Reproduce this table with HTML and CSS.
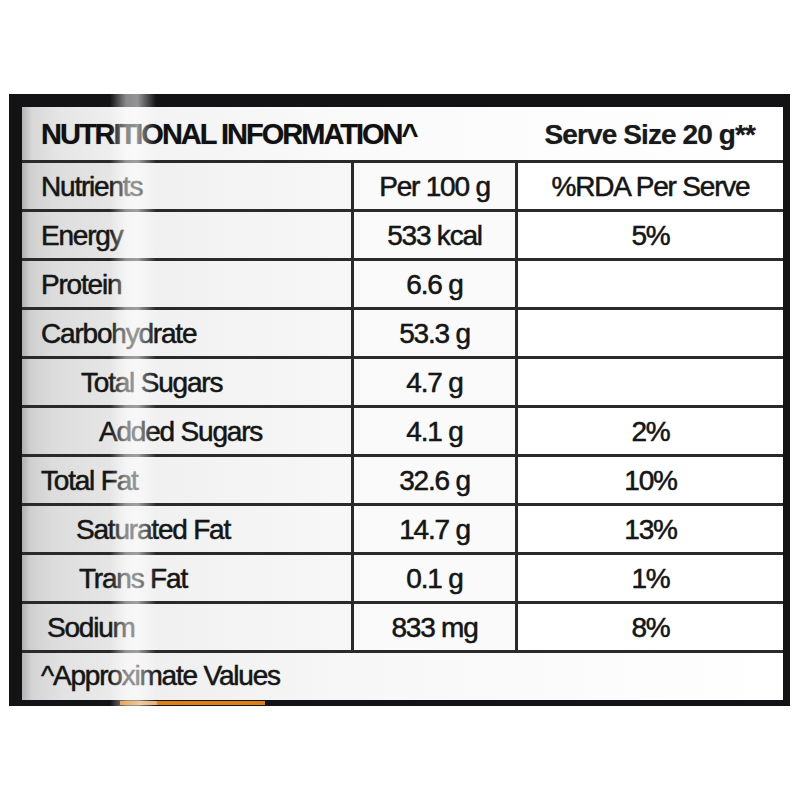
FILE: index.html
```html
<!DOCTYPE html>
<html lang="en">
<head>
<meta charset="utf-8">
<title>Nutritional Information</title>
<link rel="stylesheet" href="styles.css">
</head>
<body>
<div class="label">
  <div class="grid">
    <div class="cell head"><span class="title">NUTRITIONAL INFORMATION^</span><span class="serve">Serve Size 20 g**</span></div>

    <div class="cell c1">Nutrients</div><div class="cell c2">Per 100 g</div><div class="cell c3">%RDA Per Serve</div>
    <div class="cell c1">Energy</div><div class="cell c2">533 kcal</div><div class="cell c3">5%</div>
    <div class="cell c1">Protein</div><div class="cell c2">6.6 g</div><div class="cell c3"></div>
    <div class="cell c1">Carbohydrate</div><div class="cell c2">53.3 g</div><div class="cell c3"></div>
    <div class="cell c1 ind-ts">Total Sugars</div><div class="cell c2">4.7 g</div><div class="cell c3"></div>
    <div class="cell c1 ind-as">Added Sugars</div><div class="cell c2">4.1 g</div><div class="cell c3">2%</div>
    <div class="cell c1">Total Fat</div><div class="cell c2">32.6 g</div><div class="cell c3">10%</div>
    <div class="cell c1 ind-sf">Saturated Fat</div><div class="cell c2">14.7 g</div><div class="cell c3">13%</div>
    <div class="cell c1 ind-tf">Trans Fat</div><div class="cell c2">0.1 g</div><div class="cell c3">1%</div>
    <div class="cell c1 ind-so">Sodium</div><div class="cell c2">833 mg</div><div class="cell c3">8%</div>

    <div class="cell foot">^Approximate Values</div>
  </div>
  <div class="glare"></div>
  <div class="tab"></div>
</div>
</body>
</html>
```

FILE: styles.css
```css
html, body {
  margin: 0;
  padding: 0;
  background: #ffffff;
}

.label {
  position: relative;
  width: 761px;
  margin: 94px 0 0 9px;
  border-style: solid;
  border-color: #131316;
  border-width: 13px 7px 6px 13px;
  font-family: "Liberation Sans", Arial, sans-serif;
  color: #161616;
}

.grid {
  display: grid;
  grid-template-columns: 329px 161px 265px;
  grid-template-rows: 53px repeat(10, 46px) 47px;
  gap: 3px;
  background: #2a2a2a;
}

.cell {
  font-size: 28px;
  letter-spacing: -1.2px;
  line-height: 47px;
  white-space: nowrap;
  background: #fbfbfb;
  -webkit-text-stroke: 0.35px #1a1a1a;
  text-shadow: 0 0 1px rgba(0, 0, 0, 0.45);
}

.head {
  grid-column: 1 / 4;
  display: flex;
  justify-content: space-between;
  align-items: center;
  padding: 2px 28px 0 19px;
  line-height: 53px;
  background: linear-gradient(to right, #b4b4b4 0px, #d8d8d8 10px, #e6e6e6 40px, #f2f2f2 110px, #fafafa 330px, #ffffff 761px);
}

.title {
  font-size: 29px;
  font-weight: bold;
  letter-spacing: -2px;
  color: #111;
  -webkit-text-stroke: 0;
}

.serve {
  font-size: 28px;
  font-weight: bold;
  letter-spacing: -0.9px;
  color: #1a1a1a;
  -webkit-text-stroke: 0;
}

.c1 {
  padding-left: 19px;
  background: linear-gradient(to right, #b0b0b0 0px, #cfcfcf 8px, #dcdcdc 30px, #e6e6e6 90px, #f0f0f0 120px, #f3f3f3 200px, #f7f7f7 329px);
}

.c2 {
  text-align: center;
  background: #fafafa;
}

.c3 {
  text-align: center;
  background: #ffffff;
}

.ind-ts { padding-left: 59px; }
.ind-as { padding-left: 77px; }
.ind-sf { padding-left: 54px; }
.ind-tf { padding-left: 57px; }
.ind-so { padding-left: 25px; }

.foot {
  grid-column: 1 / 4;
  padding-left: 19px;
  line-height: 45px;
  background: linear-gradient(to right, #b4b4b4 0px, #d4d4d4 10px, #e2e2e2 40px, #eeeeee 110px, #f7f7f7 330px, #ffffff 761px);
}

.glare {
  position: absolute;
  top: -13px;
  bottom: -6px;
  left: 88px;
  width: 46px;
  background: linear-gradient(to right, rgba(255,255,255,0) 0%, rgba(255,255,255,0.5) 35%, rgba(255,255,255,0.55) 60%, rgba(255,255,255,0) 100%);
  pointer-events: none;
}

.tab {
  position: absolute;
  left: 98px;
  bottom: -5px;
  width: 145px;
  height: 4px;
  background: linear-gradient(to right, #e9a55a 0px, #f1c89a 20px, #e8b27a 36px, #e07f1a 38px, #df7d17 145px);
}
```
